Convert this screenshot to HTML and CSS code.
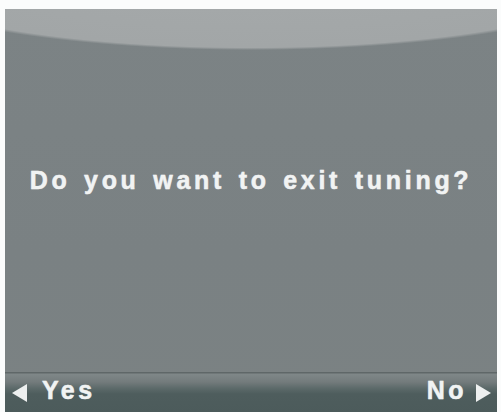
FILE: index.html
```html
<!DOCTYPE html>
<html>
<head>
<meta charset="utf-8">
<link rel="stylesheet" href="styles.css">
</head>
<body>
<div class="screen">
  <div class="message">Do you want to exit tuning?</div>
  <div class="softbar">
    <div class="soft soft-left">
      <svg class="tri" width="15" height="18" viewBox="0 0 15 18"><polygon points="15,0 15,18 0,9" fill="#eef0f0"/></svg>
      <span>Yes</span>
    </div>
    <div class="soft soft-right">
      <span>No</span>
      <svg class="tri" width="15" height="18" viewBox="0 0 15 18"><polygon points="0,0 0,18 15,9" fill="#eef0f0"/></svg>
    </div>
  </div>
</div>
</body>
</html>
```
FILE: styles.css
```css
html, body {
  margin: 0;
  padding: 0;
  background: #fbfcfc;
}
body {
  width: 501px;
  height: 412px;
  overflow: hidden;
}
.screen {
  margin: 9px 4px 0 5px;
  height: 403px;
  display: flex;
  flex-direction: column;
  background:
    radial-gradient(ellipse 394px 82px at 50% -41px, #a6aaab 0%, #a2a6a7 97%, rgba(162,166,167,0) 100%),
    linear-gradient(#7c8385, #7a8183 60%, #7b8283);
  font-family: "Liberation Sans", Arial, sans-serif;
  font-weight: bold;
  color: #f1f3f3;
}
.message {
  margin-top: 157px;
  font-size: 25px;
  line-height: 28px;
  letter-spacing: 3.7px;
  word-spacing: 3px;
  text-align: center;
  padding-left: 0;
  white-space: nowrap;
  -webkit-text-stroke: 0.4px #f1f3f3;
  text-shadow: 0 0 1px rgba(255,255,255,0.5);
}
.softbar {
  margin-top: auto;
  height: 40px;
  box-sizing: border-box;
  padding: 4px 6px 0 7px;
  display: flex;
  justify-content: space-between;
  align-items: flex-start;
  background: linear-gradient(#5f6768 0, #5f6768 1px, #7f8788 2px, #737b7c 10px, #5a6868 17px, #4e5d5d 22px, #4c5b5b 100%);
  font-size: 25px;
  line-height: 28px;
  letter-spacing: 3.5px;
}
.soft {
  display: flex;
  align-items: center;
  -webkit-text-stroke: 0.4px #f1f3f3;
  text-shadow: 0 0 1px rgba(255,255,255,0.5);
}
.soft-left {
  gap: 15px;
}
.soft-right {
  gap: 9px;
}
.tri {
  margin-top: 6px;
  display: block;
}
```
